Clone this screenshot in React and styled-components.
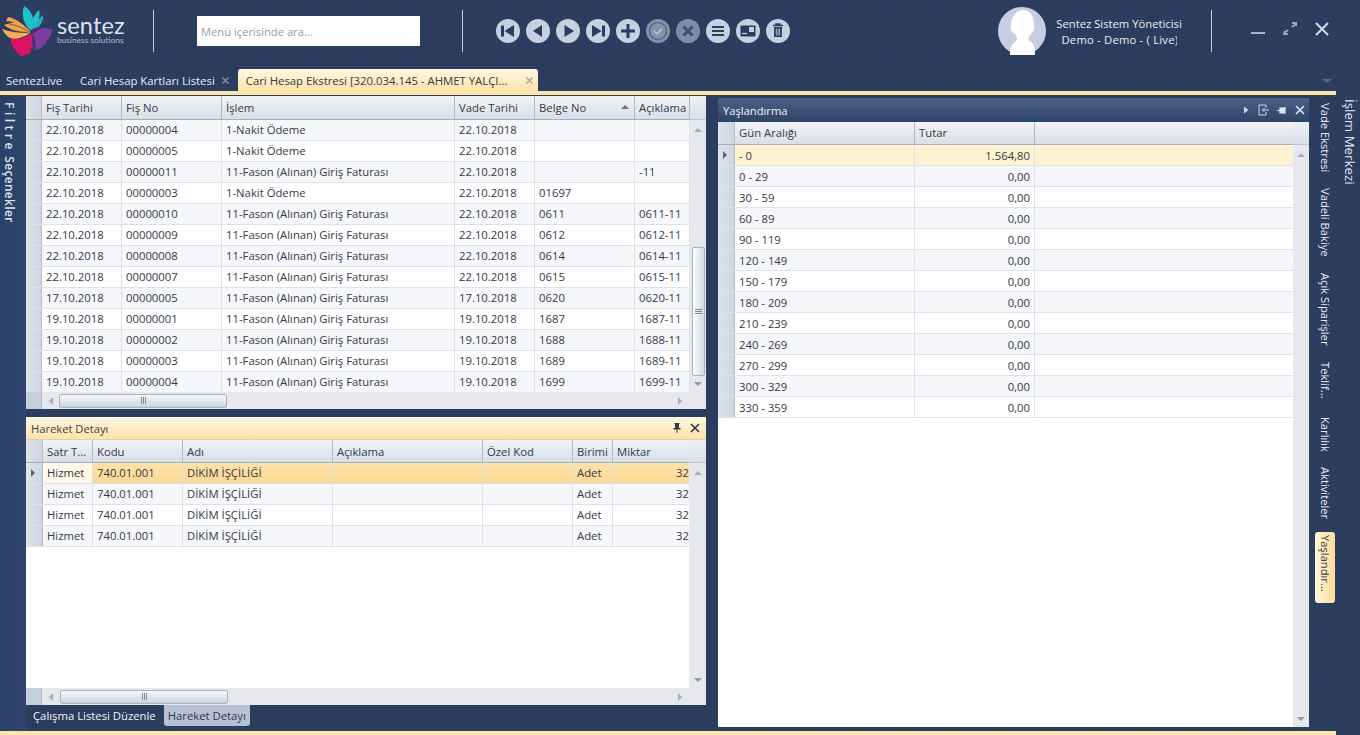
import React from "react";
import styled, { createGlobalStyle } from "styled-components";

const FONT = `"Open Sans", "Noto Sans", "Liberation Sans", sans-serif`;
const Global = createGlobalStyle`
  html, body { margin: 0; padding: 0; background: #2b3d5e; }
  * { box-sizing: border-box; }
`;
const Root = styled.div`
  width: 1360px; height: 735px; overflow: hidden; display: flex; flex-direction: column;
  font-family: ${FONT}; font-size: 11.3px; color: #333a45;
  background: repeating-conic-gradient(#2d3f61 0 25%, #2a3b5b 0 50%) 0 0 / 3px 3px;
`;
const Header = styled.header`
  height: 68px; display: flex; align-items: flex-start; flex: none; position: relative;
`;
const LogoBox = styled.div`
  width: 153px; height: 62px; display: flex; align-items: flex-start; flex: none;
`;
const LogoMark = styled.svg`width: 56px; height: 60px; flex: none; display: block;`;
const LogoText = styled.div`
  margin-left: 1px; margin-top: 15px; color: #dde3ec; font-family: "Lato", ${FONT};
  display: flex; flex-direction: column;
`;
const LogoName = styled.span`font-size: 23.6px; line-height: 21px; letter-spacing: 0.1px; font-weight: 400;`;
const LogoSub = styled.span`font-size: 8.4px; line-height: 9px; color: #aeb9cb;`;
const Divider = styled.div`
  width: 1px; height: 42px; background: #c3cddb; margin-top: 10px; flex: none;
`;
const Search = styled.input`
  width: 223px; height: 30px; margin: 16px 42px 0 43px; border: 0; background: #fff; flex: none;
  padding: 0 4px; font-family: ${FONT}; font-size: 11.2px; outline: none;
  &::placeholder { color: #979ca5; opacity: 1; }
`;
const NavBar = styled.div`display: flex; gap: 6px; margin: 19px 0 0 33px; flex: none;`;
const NavBtn = styled.svg`width: 24px; height: 24px; display: block;`;
const UserBox = styled.div`display: flex; margin-left: 208px; margin-top: 7px; flex: none;`;
const Avatar = styled.svg`width: 48px; height: 48px; display: block; flex: none;`;
const UserText = styled.div`
  width: 142px; margin-left: 2px; margin-top: 9px; color: #e9edf3; text-align: center; font-size: 11.25px; line-height: 16px;
  overflow: hidden; white-space: nowrap;
`;
const UserClip = styled.span`
  display: inline-block; width: 115px; overflow: hidden; vertical-align: top; white-space: nowrap; text-align: left; letter-spacing: 0.2px;
`;
const UserDivider = styled(Divider)`margin-left: 21px;`;
const WinBar = styled.div`display: flex; margin: 19px 0 0 37px; gap: 14px; flex: none;`;
const WinBtn = styled.svg`width: 18px; height: 20px; display: block;`;

const TabStrip = styled.div`
  height: 23px; flex: none; display: flex; align-items: flex-end; padding-left: 6px; position: relative; color: #e6eaf1; font-size: 11.35px;
`;
const Tab = styled.div`
  height: 22px; line-height: 23px; padding-top: 1px; white-space: nowrap; display: flex; flex: none; align-items: center;
  margin-left: ${p => p.$ml || 0}px;
`;
const ActiveTab = styled(Tab)`
  width: 300px; padding-left: 8px; color: #333a45; border-radius: 3px 3px 0 0;
  background: linear-gradient(#fff8e4, #fee2a8);
`;
const CloseX = styled.svg`
  width: 9px; height: 9px; margin-left: ${p => p.$ml}px; margin-bottom: ${p => p.$mb || 0}px; flex: none; display: block;
`;
const StripCaret = styled.div`
  position: absolute; right: 28px; top: 11px; width: 0; height: 0;
  border-left: 5px solid transparent; border-right: 5px solid transparent; border-top: 4px solid #56688a;
`;
const YellowLine = styled.div`height: 4px; width: 1336px; flex: none; background: #fde4a8;`;
const Main = styled.main`flex: 1; display: flex; min-height: 0;`;
const LeftRail = styled.div`
  width: 26px; flex: none; padding-top: 7px; color: #dbe2ec; writing-mode: vertical-rl; font-size: 12px; line-height: 16px; font-weight: 600;
  padding-right: 9px; white-space: pre; background: linear-gradient(90deg, #2c4066, #30466e);
`;
const Spaced = styled.span`letter-spacing: ${p => p.$ls}px;`;
const LeftCol = styled.div`
  width: 680px; flex: none; padding-top: 1px; display: flex; flex-direction: column;
`;
const Panel = styled.section`
  height: ${p => p.$h}px; flex: none; display: flex; flex-direction: column; background: #fff;
  margin-bottom: ${p => p.$mb || 0}px; overflow: hidden;
`;
const RightPanel = styled(Panel)`
  width: 591px; margin: 3px 0 0 12px; height: 629px;
`;
const TitleBar = styled.div`
  height: ${p => p.$h}px; flex: none; display: flex; align-items: center; padding: 0 ${p => p.$pr}px 0 5px; justify-content: space-between;
  background: ${p => p.$dark ? "linear-gradient(#4d6187, #2f4469)" : "linear-gradient(#fff8e4, #fee2a6)"};
  color: ${p => p.$dark ? "#f0f3f7" : "#3a3f48"}; font-size: 11.2px; border-bottom: 1px solid ${p => p.$dark ? "#2f4469" : "#d9d2b8"};
`;
const TitleText = styled.span`padding-top: ${p => p.$pt || 0}px;`;
const TitleIcons = styled.div`display: flex; align-items: center; gap: ${p => p.$gap}px;`;
const TitleIcon = styled.svg`width: 12px; height: 12px; display: block;`;
const Body = styled.div`flex: 1; display: flex; min-height: 0;`;
const GridWrap = styled.div`flex: 1; min-width: 0; display: flex; flex-direction: column; overflow: hidden;`;
const HeadRow = styled.div`
  height: ${p => p.$h}px; flex: none; display: flex;
  background: linear-gradient(#f2f4f7, #d9dee8); border-bottom: 1px solid #a6aebb;
`;
const HeadCell = styled.div`
  width: ${p => p.$w}px; flex: ${p => p.$grow ? 1 : "none"}; padding-left: 4px; line-height: ${p => p.$lh}px;
  border-right: ${p => p.$grow || p.$flush ? 0 : "1px solid #b0b8c5"}; white-space: nowrap; overflow: hidden; position: relative;
`;
const RowHead = styled.div`
  width: ${p => p.$w}px; flex: none; display: flex; align-items: center; padding-left: 5px;
  background: linear-gradient(90deg, #dfe4ec, #ccd5e1); border-right: 1px solid #b7bfcb;
`;
const SortMark = styled.i`
  position: absolute; right: 5px; top: 9px; width: 0; height: 0;
  border-left: 4px solid transparent; border-right: 4px solid transparent; border-bottom: 4px solid #6b7689;
`;
const Row = styled.div`
  height: 21px; flex: none; display: flex; border-bottom: 1px solid #dde1e8;
  background: ${p => p.$sel === "soft" ? "#fff2d3" : p.$sel === "strong" ? "linear-gradient(#fee3ac, #fdd793)" : p.$odd ? "#f6f7fa" : "#fff"};
`;
const Cell = styled.div`
  width: ${p => p.$w}px; flex: ${p => p.$grow ? 1 : "none"}; padding: 0 ${p => p.$flush ? 0 : 4}px 0 4px; line-height: ${p => p.$lh}px; white-space: nowrap; overflow: hidden;
  text-align: ${p => p.$right ? "right" : "left"}; border-right: ${p => p.$grow || p.$flush ? 0 : "1px solid #dde1e8"};
  background: ${p => p.$focus ? "#fff8e8" : "transparent"};
`;
const RowMark = styled.i`
  width: 0; height: 0; border-top: 4px solid transparent; border-bottom: 4px solid transparent; border-left: 4px solid #5b6679;
`;
const Fill = styled.div`flex: 1; background: #fff;`;
const VScroll = styled.div`
  width: ${p => p.$w || 16}px; flex: none; display: flex; flex-direction: column; align-items: center; background: #e6e8ed;
`;
const ScrollCorner = styled.div`
  height: ${p => p.$h}px; width: 100%; flex: none; background: linear-gradient(#edf0f4, #dbe0e8); border-bottom: 1px solid #c2c8d2;
`;
const ArrowUp = styled.i`
  flex: none; margin: 8px 0 0; width: 0; height: 0;
  border-left: 4px solid transparent; border-right: 4px solid transparent; border-bottom: 4px solid #a3adbc;
`;
const ArrowDown = styled.i`
  flex: none; margin: 0 0 6px; width: 0; height: 0;
  border-left: 4px solid transparent; border-right: 4px solid transparent; border-top: 4px solid #8e99aa;
`;
const VThumb = styled.div`
  width: 13px; height: ${p => p.$h}px; margin-top: ${p => p.$mt}px; flex: none; border: 1px solid #aab2bf; border-radius: 2px;
  background: linear-gradient(90deg, #fbfcfd, #d5dae3); display: flex; align-items: center; justify-content: center;
`;
const Spacer = styled.div`flex: 1;`;
const HScroll = styled.div`
  height: 17px; flex: none; display: flex; align-items: center; background: #e6e8ed;
`;
const HCorner = styled.div`width: 16px; height: 100%; flex: none; background: #c6d0dd; border-right: 1px solid #b7bfcb;`;
const ArrowLeft = styled.i`
  flex: none; margin-left: 7px; width: 0; height: 0;
  border-top: 4px solid transparent; border-bottom: 4px solid transparent; border-right: 4px solid #a3adbc;
`;
const ArrowRight = styled.i`
  flex: none; margin-right: 24px; width: 0; height: 0;
  border-top: 4px solid transparent; border-bottom: 4px solid transparent; border-left: 4px solid #a3adbc;
`;
const HThumb = styled.div`
  width: 168px; height: 14px; margin-left: ${p => p.$lead}px; flex: none; border: 1px solid #aab2bf; border-radius: 2px;
  background: linear-gradient(#f8f9fb, #cdd3dd); display: flex; align-items: center; justify-content: center;
`;
const Grip = styled.svg`width: 9px; height: 9px; display: block;`;
const BottomTabs = styled.div`
  height: 22px; flex: none; display: flex; padding-left: 7px; color: #f2f4f8; font-size: 11.3px; line-height: 22px;
`;
const BottomTab = styled.div`
  white-space: nowrap; flex: none; height: 21px; padding: 0 ${p => p.$on ? 4 : 0}px;
  margin-left: ${p => p.$ml || 0}px; color: ${p => p.$on ? "#333a45" : "inherit"}; background: ${p => p.$on ? "#b6c1d4" : "none"}; border-radius: 0 0 3px 3px;
`;
const RightRail = styled.aside`width: 51px; flex: none; display: flex; position: relative;`;
const SideTabs = styled.div`
  width: 20px; margin-left: 6px; display: flex; flex-direction: column; padding-top: 8px; flex: none;
`;
const SideTab = styled.div`
  writing-mode: vertical-rl; white-space: nowrap; height: ${p => p.$h}px; width: 20px; flex: none; line-height: 19px; color: #e8ecf2; font-size: 11.2px;
`;
const SideTabOn = styled(SideTab)`
  height: 71px; margin-top: -2px; padding-top: 3px; color: #333a45; border-radius: 3px;
  background: linear-gradient(90deg, #fff6dd, #fedd9a);
`;
const RailTitle = styled.div`
  writing-mode: vertical-rl; white-space: nowrap; margin: 4px 0 0 6px; color: #dfe5ee; font-size: 13.3px; line-height: 18px; flex: none;
`;
const FootLine = styled.div`height: 4px; width: 1336px; flex: none; background: #fde4a8;`;

const Ic = ({ children, dim }) => (
  <NavBtn viewBox="0 0 24 24">
    <circle cx="12" cy="12" r="12" fill={dim || "#c5d0e1"} />
    {children}
  </NavBtn>
);
const NAVY = "#2b3d5e";

const Logo = () => (
  <LogoMark viewBox="0 0 56 60">
    <path d="M31 31C24 25 21 16 24 6C29 9 32 13 33 18C35 15 36 12 39 10C41 17 38 26 32 31Z" fill="#1fc0c8" />
    <path d="M34 30C36 24 39 18 43 15C44 21 40 27 34 31Z" fill="#2aa7b8" />
    <path d="M30 31C23 24 15 18 8 17L6 21L14 22L4 25C10 30 20 33 30 33Z" fill="#f3a24a" />
    <path d="M29 33C20 33 10 32 2 29C4 33 8 38 13 39C19 39 25 36 29 34Z" fill="#f7ae55" />
    <path d="M9 24C15 25 22 27 29 32M6 29C13 31 21 32 29 33" stroke="#2b3d5e" strokeWidth="0.7" fill="none" />
    <path d="M30 34C24 39 17 40 11 38C10 44 14 50 22 57C24 54 26 54 29 54C33 48 33 40 31 34Z" fill="#df1162" />
    <path d="M32 33C38 28 46 27 53 30C50 34 51 38 47 41C45 46 40 49 36 50C30 48 31 40 32 33Z" fill="#7a3f9c" />
    <path d="M33 34C36 40 35 46 36 50C32 48 31 40 33 34Z" fill="#4d2a78" />
    <path d="M30 31C33 28 37 27 42 27L33 34Z" fill="#4b2c6f" />
  </LogoMark>
);

const upperCols = [
  { t: "Fiş Tarihi", w: 80 }, { t: "Fiş No", w: 100 }, { t: "İşlem", w: 233 },
  { t: "Vade Tarihi", w: 80 }, { t: "Belge No", w: 100, sort: true }, { t: "Açıklama", w: 55 },
];
const N = "1-Nakit Ödeme", F = "11-Fason (Alınan) Giriş Faturası";
const upperRows = [
  ["22.10.2018", "00000004", N, "22.10.2018", "", ""],
  ["22.10.2018", "00000005", N, "22.10.2018", "", ""],
  ["22.10.2018", "00000011", F, "22.10.2018", "", "-11"],
  ["22.10.2018", "00000003", N, "22.10.2018", "01697", ""],
  ["22.10.2018", "00000010", F, "22.10.2018", "0611", "0611-11"],
  ["22.10.2018", "00000009", F, "22.10.2018", "0612", "0612-11"],
  ["22.10.2018", "00000008", F, "22.10.2018", "0614", "0614-11"],
  ["22.10.2018", "00000007", F, "22.10.2018", "0615", "0615-11"],
  ["17.10.2018", "00000005", F, "17.10.2018", "0620", "0620-11"],
  ["19.10.2018", "00000001", F, "19.10.2018", "1687", "1687-11"],
  ["19.10.2018", "00000002", F, "19.10.2018", "1688", "1688-11"],
  ["19.10.2018", "00000003", F, "19.10.2018", "1689", "1689-11"],
  ["19.10.2018", "00000004", F, "19.10.2018", "1699", "1699-11"],
];
const lowerCols = [
  { t: "Satr T...", w: 50 }, { t: "Kodu", w: 90 }, { t: "Adı", w: 150 }, { t: "Açıklama", w: 150 },
  { t: "Özel Kod", w: 90 }, { t: "Birimi", w: 40 }, { t: "Miktar", w: 76, right: true, flush: true },
];
const lowerRow = ["Hizmet", "740.01.001", "DİKİM İŞÇİLİĞİ", "", "", "Adet", "32"];
const lowerRows = [lowerRow, lowerRow, lowerRow, lowerRow];
const ageCols = [{ t: "Gün Aralığı", w: 180 }, { t: "Tutar", w: 120, right: true }, { t: "", grow: true }];
const ageRows = ["- 0", "0 - 29", "30 - 59", "60 - 89", "90 - 119", "120 - 149", "150 - 179", "180 - 209", "210 - 239", "240 - 269", "270 - 299", "300 - 329", "330 - 359"]
  .map((r, i) => [r, i === 0 ? "1.564,80" : "0,00", ""]);

const Table = ({ cols, rows, headH, headLh, rowLh = 20, rowHeadW = 16, selected, oddFirst = true, focusFirst }) => (
  <GridWrap>
    <HeadRow $h={headH}>
      <RowHead $w={rowHeadW} />
      {cols.map(c => (
        <HeadCell key={c.t} $w={c.w} $grow={c.grow} $flush={c.flush} $lh={headLh || headH}>
          {c.t}{c.sort && <SortMark />}
        </HeadCell>
      ))}
    </HeadRow>
    {rows.map((r, i) => (
      <Row key={i} $odd={(i % 2 === 0) === oddFirst} $sel={i === 0 ? selected : undefined}>
        <RowHead $w={rowHeadW}>{i === 0 && selected && <RowMark />}</RowHead>
        {r.map((v, j) => (
          <Cell key={j} $w={cols[j].w} $grow={cols[j].grow} $right={cols[j].right} $flush={cols[j].flush} $lh={rowLh}
            $focus={focusFirst && i === 0 && j === 0}>{v}</Cell>
        ))}
      </Row>
    ))}
    <Fill />
  </GridWrap>
);

const VGrip = () => (
  <Grip viewBox="0 0 9 9"><path d="M1 2.5H8M1 4.5H8M1 6.5H8" stroke="#7d8796" strokeWidth="1" /></Grip>
);
const HGrip = () => (
  <Grip viewBox="0 0 9 9"><path d="M2.5 1V8M4.5 1V8M6.5 1V8" stroke="#7d8796" strokeWidth="1" /></Grip>
);
const Hbar = ({ lead }) => (
  <HScroll>
    <HCorner />
    <ArrowLeft />
    <HThumb $lead={lead}><HGrip /></HThumb>
    <Spacer />
    <ArrowRight />
  </HScroll>
);
const X = ({ c = "#fff", w = 1.6 }) => <path d="M2 2L10 10M10 2L2 10" stroke={c} strokeWidth={w} fill="none" />;

export default function App() {
  return (
    <Root>
      <Global />
      <Header>
        <LogoBox>
          <Logo />
          <LogoText>
            <LogoName>sentez</LogoName>
            <LogoSub>business solutions</LogoSub>
          </LogoText>
        </LogoBox>
        <Divider />
        <Search placeholder="Menü içerisinde ara..." readOnly />
        <Divider />
        <NavBar>
          <Ic><rect x="5" y="6.5" width="3" height="11" fill={NAVY} /><path d="M18 6V18L8.5 12Z" fill={NAVY} /></Ic>
          <Ic><path d="M16 6V18L7 12Z" fill={NAVY} /></Ic>
          <Ic><path d="M8.5 6V18L18 12Z" fill={NAVY} /></Ic>
          <Ic><rect x="16" y="6.5" width="3" height="11" fill={NAVY} /><path d="M6 6V18L15.5 12Z" fill={NAVY} /></Ic>
          <Ic><path d="M12 5V19M5 12H19" stroke={NAVY} strokeWidth="3" /></Ic>
          <Ic dim="#8592ac">
            <circle cx="12" cy="12" r="8.5" fill="none" stroke="#5b6a88" strokeWidth="1.6" />
            <path d="M8 12L11 15L16 9.5" fill="none" stroke="#c0c9d8" strokeWidth="1.5" />
          </Ic>
          <Ic dim="#7e8ba7"><path d="M7.5 7.5L16.5 16.5M16.5 7.5L7.5 16.5" stroke="#3a4b6c" strokeWidth="2.6" /></Ic>
          <Ic><path d="M6 8H18M6 12H18M6 16H18" stroke={NAVY} strokeWidth="2" /></Ic>
          <Ic>
            <rect x="4.5" y="6.5" width="15" height="11" rx="1" fill={NAVY} />
            <rect x="13" y="8" width="5" height="5" fill="#c5d0e1" />
            <path d="M6 14.5H11" stroke="#c5d0e1" strokeWidth="1.2" />
          </Ic>
          <Ic>
            <path d="M7 6.5H17M10 6.5V5H14V6.5" stroke={NAVY} strokeWidth="1.4" fill="none" />
            <path d="M8 8H16V18H8Z" fill={NAVY} />
            <path d="M10.3 9.5V16.5M12 9.5V16.5M13.7 9.5V16.5" stroke="#c5d0e1" strokeWidth="0.8" />
          </Ic>
        </NavBar>
        <UserBox>
          <Avatar viewBox="0 0 48 48">
            <circle cx="24" cy="24" r="24" fill="#c5cfdf" />
            <path d="M12 48C12 42 13 37 18 34C20 33 19 30 17 27C13 25 12 22 13 18C13 9 19 3 25 3C32 3 36 9 36 18C37 22 35 25 33 27C30 30 30 33 32 34C36 36 37 42 37 48Z" fill="#fff" />
          </Avatar>
          <UserText>Sentez Sistem Yöneticisi<br /><UserClip>Demo - Demo - ( Live)</UserClip></UserText>
        </UserBox>
        <UserDivider />
        <WinBar>
          <WinBtn viewBox="0 0 18 20"><path d="M2 14H16" stroke="#b7c2d3" strokeWidth="1.8" /></WinBtn>
          <WinBtn viewBox="0 0 18 20"><path d="M3 14L7 11M7 15L3 15L4 12M15 5L11 8M11 4H15V7" stroke="#9aa7bc" strokeWidth="2" fill="none" /></WinBtn>
          <WinBtn viewBox="0 0 18 20"><path d="M3 4L15 16M15 4L3 16" stroke="#d3dae6" strokeWidth="2" /></WinBtn>
        </WinBar>
      </Header>
      <TabStrip>
        <Tab>SentezLive</Tab>
        <Tab $ml={18}>Cari Hesap Kartları Listesi</Tab>
        <CloseX $ml={6} $mb={6} viewBox="0 0 12 12"><X c="#7f8ca4" w={2} /></CloseX>
        <ActiveTab $ml={8}>
          Cari Hesap Ekstresi [320.034.145 - AHMET YALÇI...
          <CloseX $ml={18} viewBox="0 0 12 12"><X c="#a7a594" w={1.8} /></CloseX>
        </ActiveTab>
        <StripCaret />
      </TabStrip>
      <YellowLine />
      <Main>
        <LeftRail>
          <Spaced $ls={3.5}>Filtre</Spaced>
          <Spaced $ls={0.3}> Seçenekler</Spaced>
        </LeftRail>
        <LeftCol>
          <Panel $h={313} $mb={8}>
            <Body>
              <Table cols={upperCols} rows={upperRows} headH={24} rowLh={19} />
              <VScroll>
                <ScrollCorner $h={24} />
                <ArrowUp />
                <VThumb $h={129} $mt={115}><VGrip /></VThumb>
                <Spacer />
                <ArrowDown />
              </VScroll>
            </Body>
            <Hbar lead={6} />
          </Panel>
          <Panel $h={288}>
            <TitleBar $h={23} $pr={5}>
              <TitleText>Hareket Detayı</TitleText>
              <TitleIcons $gap={6}>
                <TitleIcon viewBox="0 0 12 12"><path d="M3.5 1H8.5V2H8V6H9.5V7.5H6.5V11H5.5V7.5H2.5V6H4V2H3.5Z" fill="#333a45" /></TitleIcon>
                <TitleIcon viewBox="0 0 12 12"><X c="#333a45" w={1.7} /></TitleIcon>
              </TitleIcons>
            </TitleBar>
            <Body>
              <Table cols={lowerCols} rows={lowerRows} headH={23} rowHeadW={17} selected="strong" oddFirst={false} focusFirst />
              <VScroll $w={17}>
                <ScrollCorner $h={23} />
                <ArrowUp />
                <Spacer />
                <ArrowDown />
              </VScroll>
            </Body>
            <Hbar lead={7} />
          </Panel>
          <BottomTabs>
            <BottomTab>Çalışma Listesi Düzenle</BottomTab>
            <BottomTab $on $ml={8}>Hareket Detayı</BottomTab>
          </BottomTabs>
        </LeftCol>
        <RightPanel $h={629}>
          <TitleBar $h={24} $pr={3} $dark>
            <TitleText $pt={1}>Yaşlandırma</TitleText>
            <TitleIcons $gap={6}>
              <TitleIcon viewBox="0 0 12 12"><path d="M4 2.5L8.5 6L4 9.5Z" fill="#cfd7e3" /></TitleIcon>
              <TitleIcon viewBox="0 0 12 12"><path d="M8 4V1H1V11H8V8M11 6H4.5M6.5 4L4.5 6L6.5 8" stroke="#cfd7e3" strokeWidth="1" fill="none" /></TitleIcon>
              <TitleIcon viewBox="0 0 12 12"><path d="M1 6.5H4M4 4H9V9H4ZM9 4V3M9 9V10" stroke="#dfe5ed" strokeWidth="1.2" fill="#dfe5ed" /></TitleIcon>
              <TitleIcon viewBox="0 0 12 12"><X c="#dfe5ed" w={1.6} /></TitleIcon>
            </TitleIcons>
          </TitleBar>
          <Body>
            <Table cols={ageCols} rows={ageRows} headH={23} headLh={22} rowLh={21} rowHeadW={17} selected="soft" oddFirst={false} />
            <VScroll $w={16}>
              <ScrollCorner $h={23} />
              <ArrowUp />
              <Spacer />
              <ArrowDown />
            </VScroll>
          </Body>
        </RightPanel>
        <RightRail>
          <SideTabs>
            <SideTab $h={85}>Vade Ekstresi</SideTab>
            <SideTab $h={85}>Vadeli Bakiye</SideTab>
            <SideTab $h={89}>Açık Siparişler</SideTab>
            <SideTab $h={55}>Teklif...</SideTab>
            <SideTab $h={50}>Karlılık</SideTab>
            <SideTab $h={67}>Aktiviteler</SideTab>
            <SideTabOn>Yaşlandır...</SideTabOn>
          </SideTabs>
          <RailTitle>İşlem Merkezi</RailTitle>
        </RightRail>
      </Main>
      <FootLine />
    </Root>
  );
}
